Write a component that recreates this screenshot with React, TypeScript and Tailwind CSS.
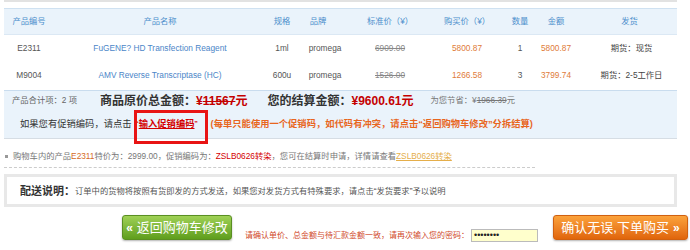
import React from 'react';

const cols = 'grid grid-cols-[50px_212px_32px_48px_88px_66px_40px_32px_105px] items-center text-center';

const items = [
  { code: 'E2311', name: 'FuGENE? HD Transfection Reagent', spec: '1ml', brand: 'promega', std: '6909.00', price: '5800.87', qty: 1, total: '5800.87', ship: '期货：现货' },
  { code: 'M9004', name: 'AMV Reverse Transcriptase (HC)', spec: '600u', brand: 'promega', std: '1526.00', price: '1266.58', qty: 3, total: '3799.74', ship: '期货：2-5工作日' },
];

export default function App() {
  return (
    <div className="w-[690px] h-[250px] bg-white overflow-hidden text-[8.3px] text-[#555] font-['Liberation_Sans','Noto_Sans_CJK_SC',sans-serif]">
      <div className="mx-[4px] w-[673px]">
        {/* top bar */}
        <div className="h-[2px] bg-[#e2e2e2]" />

        {/* header */}
        <div className={`${cols} mt-[6px] h-[27px] bg-[#eaf3fb] border-t border-[#cfe1f1] border-b border-b-[#dbe8f4] text-[#4d8fcc]`}>
          <div>产品编号</div>
          <div>产品名称</div>
          <div>规格</div>
          <div className="pr-[8px]">品牌</div>
          <div>标准价（¥）</div>
          <div>购买价（¥）</div>
          <div>数量</div>
          <div>金额</div>
          <div className="pl-[10px]">发货</div>
        </div>

        {/* rows */}
        {items.map((it) => (
          <div key={it.code} className={`${cols} h-[27px]`}>
            <div>{it.code}</div>
            <div className="text-[#4b86c8]">{it.name}</div>
            <div>{it.spec}</div>
            <div className="pl-[6px]">{it.brand}</div>
            <div className="line-through text-[#888]">{it.std}</div>
            <div className="text-[#e07b39]">{it.price}</div>
            <div>{it.qty}</div>
            <div className="text-[#e07b39]">{it.total}</div>
            <div className="pl-[14px] text-[#444]">{it.ship}</div>
          </div>
        ))}

        {/* summary */}
        <div className="mt-[1px] h-[49px] bg-[#eaf3fb] border-t border-[#c9dcee] border-b border-b-[#d6dde4] relative">
          <div className="flex items-center h-[18px] pt-[1px]">
            <span className="ml-[8px] text-[#666]">产品合计项：2 项</span>
            <span className="ml-[23px] text-[12px] font-bold text-[#333]">
              商品原价总金额：<span className="text-[#c40000]">¥<span className="line-through">11567</span>元</span>
            </span>
            <span className="ml-[20px] text-[12px] font-bold text-[#333]">
              您的结算金额：<span className="text-[#c40000]">¥9600.61元</span>
            </span>
            <span className="ml-[17px] text-[#777]">
              为您节省：¥<span className="line-through">1966.39</span>元
            </span>
          </div>
          <div className="flex items-center h-[26px] pt-[5px] pl-[16px] text-[9.3px]">
            <span className="text-[#333]">如果您有促销编码，请点击</span>
            <span className="relative ml-[2px] pl-[2px] pr-[13px] text-[#d40000]">
              “<span className="underline font-bold">输入促销编码</span>”
              <span className="absolute left-[0px] right-[3px] top-[-8px] bottom-[-13px] border-[3px] border-[#e81414]" />
            </span>
            <span className="font-bold text-[#e8661e]">(每单只能使用一个促销码，如代码有冲突，请点击“返回购物车修改”分拆结算)</span>
          </div>
        </div>

        {/* promo note */}
        <div className="mt-[11px] flex items-center text-[#777]">
          <span className="w-[3px] h-[3px] bg-[#999] ml-[1px] mr-[5px]" />
          <span>
            购物车内的产品<span className="text-[#d56a1e]">E2311</span>特价为：2999.00，促销编码为：
            <span className="text-[#d40000]">ZSLB0626转染</span>，您可在结算时申请，详情请查看
            <span className="text-[#e5ae4a] underline">ZSLB0626转染</span>
          </span>
        </div>
        <div className="mt-[5px] w-[531px] border-t border-dashed border-[#ccc]" />

        {/* delivery */}
        <div className="mt-[6px] h-[33px] border-[3px] border-[#e8e8e8] bg-white flex items-center pl-[13px]">
          <span className="text-[11px] font-bold text-[#333]">配送说明：</span>
          <span className="text-[#555]">订单中的货物将按照有货即发的方式发送，如果您对发货方式有特殊要求，请点击“发货要求”予以说明</span>
        </div>
      </div>

      {/* actions */}
      <div className="mt-[8px] flex items-start">
        <button className="ml-[122px] w-[110px] h-[25px] rounded-[3px] bg-gradient-to-b from-[#9fd155] to-[#5f9e1c] border border-[#5a8f22] text-white text-[13px] flex items-center justify-center gap-[4px] shadow-[0_1px_2px_rgba(0,0,0,0.3)]">
          <span className="font-bold text-[12px]">«</span>返回购物车修改
        </button>
        <div className="ml-[13px] mt-[14px] flex items-center">
          <span className="text-[8px] text-[#d0492a]">请确认单价、总金额与待汇款金额一致，请再次输入您的密码：</span>
          <div className="ml-[2px] w-[67px] h-[13px] bg-[#ffffcc] border border-[#bbb] flex items-center pl-[2px] text-[9px] leading-none text-[#222]">
            ••••••••
          </div>
        </div>
        <button className="ml-[15px] w-[135px] h-[25px] rounded-[3px] bg-gradient-to-b from-[#fba23a] to-[#e0650a] border border-[#d06010] text-white text-[13px] flex items-center justify-center gap-[4px] shadow-[0_1px_2px_rgba(0,0,0,0.3)]">
          确认无误,下单购买<span className="font-bold text-[12px]">»</span>
        </button>
      </div>
    </div>
  );
}
